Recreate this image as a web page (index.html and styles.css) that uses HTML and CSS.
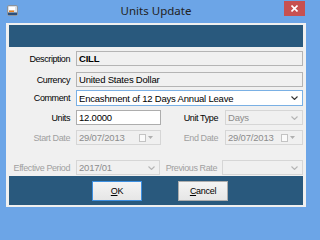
FILE: index.html
```html
<!DOCTYPE html>
<html>
<head>
<meta charset="utf-8">
<link rel="stylesheet" href="styles.css">
</head>
<body>
<div class="window">
  <div class="titlebar">
    <svg class="appicon" width="11" height="11" viewBox="0 0 11 11">
      <rect x="0.5" y="0.5" width="10" height="10" rx="1.5" fill="#d9dee4" stroke="#8b929b"/>
      <rect x="2" y="2" width="6" height="3" fill="#ffffff"/>
      <rect x="2" y="5.5" width="5" height="1.5" fill="#e8801f"/>
      <rect x="1" y="7.5" width="9" height="2.5" fill="#2b4f7b"/>
    </svg>
    <div class="title">Units Update</div>
    <div class="close">
      <svg width="7" height="7" viewBox="0 0 7 7"><path d="M0.5 0.5 L6.5 6.5 M6.5 0.5 L0.5 6.5" stroke="#fff" stroke-width="1.6"/></svg>
    </div>
  </div>
  <div class="client">
    <div class="band header"></div>
    <div class="form">
      <div class="row r1">
        <span class="lbl">Description</span>
        <div class="box ro wide bold">CILL</div>
      </div>
      <div class="row r2">
        <span class="lbl">Currency</span>
        <div class="box ro wide">United States Dollar</div>
      </div>
      <div class="row r3">
        <span class="lbl">Comment</span>
        <div class="box combo active wide">
          <span class="txt">Encashment of 12 Days Annual Leave</span>
          <svg class="chev" width="7" height="4" viewBox="0 0 7 4"><path d="M0.5 0.5 L3.5 3.5 L6.5 0.5" fill="none" stroke="#333" stroke-width="1.1"/></svg>
        </div>
      </div>
      <div class="row r4">
        <span class="lbl">Units</span>
        <div class="box edit half">12.0000</div>
        <span class="lbl2">Unit Type</span>
        <div class="box dis combo wide">
          <span class="txt">Days</span>
          <svg class="chev" width="7" height="4" viewBox="0 0 7 4"><path d="M0.5 0.5 L3.5 3.5 L6.5 0.5" fill="none" stroke="#b5b5b5" stroke-width="1.1"/></svg>
        </div>
      </div>
      <div class="row r5">
        <span class="lbl dim">Start Date</span>
        <div class="box dis half date">
          <span class="txt">29/07/2013</span>
          <span class="cal"></span>
          <svg class="drop" width="5" height="3" viewBox="0 0 5 3"><path d="M0 0 L5 0 L2.5 3 Z" fill="#b0b0b0"/></svg>
        </div>
        <span class="lbl2 dim">End Date</span>
        <div class="box dis wide date">
          <span class="txt">29/07/2013</span>
          <span class="cal"></span>
          <svg class="drop" width="5" height="3" viewBox="0 0 5 3"><path d="M0 0 L5 0 L2.5 3 Z" fill="#b0b0b0"/></svg>
        </div>
      </div>
      <div class="row r6">
        <span class="lbl dim">Effective Period</span>
        <div class="box dis combo eff">
          <span class="txt">2017/01</span>
          <svg class="chev" width="7" height="4" viewBox="0 0 7 4"><path d="M0.5 0.5 L3.5 3.5 L6.5 0.5" fill="none" stroke="#b5b5b5" stroke-width="1.1"/></svg>
        </div>
        <span class="lbl2 dim prev">Previous Rate</span>
        <div class="box dis combo wide">
          <span class="txt"></span>
          <svg class="chev" width="7" height="4" viewBox="0 0 7 4"><path d="M0.5 0.5 L3.5 3.5 L6.5 0.5" fill="none" stroke="#b5b5b5" stroke-width="1.1"/></svg>
        </div>
      </div>
    </div>
    <div class="band footer">
      <button class="btn default"><u>O</u>K</button>
      <button class="btn"><u>C</u>ancel</button>
    </div>
  </div>
</div>
</body>
</html>
```
FILE: styles.css
```css
html, body {
  margin: 0;
  padding: 0;
}
body {
  width: 312px;
  height: 216px;
  overflow: hidden;
  background: #6ca5e7;
  font-family: "Liberation Sans", Arial, sans-serif;
  font-size: 9px;
  letter-spacing: -0.4px;
  color: #000;
}
.window {
  width: 312px;
  height: 216px;
}
.titlebar {
  height: 23px;
  display: grid;
  grid-template-columns: 1fr auto 1fr;
  align-items: start;
  padding: 0 7px;
  box-sizing: border-box;
}
.appicon {
  margin-top: 5px;
  display: block;
}
.title {
  font-family: "Noto Sans", "Liberation Sans", sans-serif;
  font-size: 11.5px;
  letter-spacing: 0;
  line-height: 22px;
  color: #222;
  white-space: nowrap;
}
.close {
  justify-self: end;
  margin-top: 1px;
  width: 21px;
  height: 15px;
  background: #c75050;
  display: flex;
  align-items: center;
  justify-content: center;
}
.close svg {
  display: block;
}
.client {
  margin: 0 6px;
  height: 184px;
  box-sizing: border-box;
  padding: 2px 3px;
  background: #f0f0f0;
  display: flex;
  flex-direction: column;
}
.band {
  background: #29597d;
}
.header {
  height: 22px;
  flex: none;
}
.form {
  flex: 1;
  display: flex;
  flex-direction: column;
}
.row {
  display: flex;
  align-items: center;
  height: 15px;
  flex: none;
}
.r1 { margin-top: 4px; }
.r2 { margin-top: 6px; }
.r3 { margin-top: 3px; height: 16px; }
.r4 { margin-top: 4px; }
.r5 { margin-top: 5px; }
.r6 { margin-top: 15px; }
.lbl {
  width: 61px;
  margin-right: 6px;
  text-align: right;
  white-space: nowrap;
  flex: none;
}
.lbl2 {
  width: 57px;
  margin-right: 7px;
  text-align: right;
  white-space: nowrap;
  flex: none;
}
.prev {
  margin-right: 5px;
}
.dim {
  color: #a0a0a0;
}
.box {
  box-sizing: border-box;
  height: 100%;
  border: 1px solid #b9b9b9;
  display: flex;
  align-items: center;
  padding: 0 2px;
  white-space: nowrap;
  overflow: hidden;
  font-size: 9.5px;
  letter-spacing: -0.2px;
}
.wide { flex: 1; }
.half { width: 85px; flex: none; }
.eff { width: 84px; flex: none; }
.bold { font-weight: bold; }
.ro {
  background: #f0f0f0;
  border-color: #b4b4b4;
}
.edit {
  background: #fff;
  border-color: #adadad;
}
.active {
  background: #fff;
  border-color: #7ab0e4;
}
.dis {
  background: #f0f0f0;
  border-color: #d6d6d6;
  color: #8c8c8c;
}
.txt {
  flex: 1;
}
.chev {
  display: block;
  margin-right: 2px;
  flex: none;
}
.cal {
  width: 5px;
  height: 6px;
  border: 1px solid #c3c3c3;
  background: #fafafa;
  margin-right: 2px;
  flex: none;
}
.drop {
  display: block;
  margin-right: 5px;
  flex: none;
}
.footer {
  height: 29px;
  flex: none;
  display: flex;
  align-items: center;
  padding-left: 83px;
  gap: 36px;
}
.btn {
  width: 50px;
  height: 20px;
  box-sizing: border-box;
  border: 1px solid #adadad;
  background: linear-gradient(#f4f4f4, #e6e6e6);
  font-family: "Liberation Sans", Arial, sans-serif;
  font-size: 9px;
  letter-spacing: -0.3px;
  color: #000;
  padding: 0;
  margin: 0;
}
.btn.default {
  border-color: #3d8fe0;
}
```
